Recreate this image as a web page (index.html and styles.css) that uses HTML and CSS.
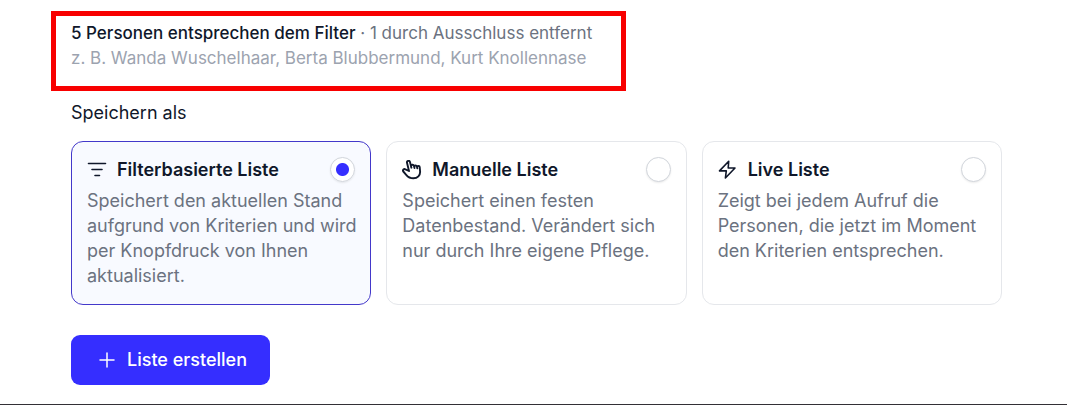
FILE: index.html
```html
<!DOCTYPE html>
<html lang="de">
<head>
<meta charset="utf-8">
<meta name="viewport" content="width=device-width, initial-scale=1">
<title>Liste speichern</title>
<link rel="stylesheet" href="styles.css">
</head>
<body>
<form class="page">
  <section class="summary">
    <p class="summary-line"><strong class="summary-count">5 Personen entsprechen dem Filter</strong> · 1 durch Ausschluss entfernt</p>
    <p class="summary-names">z. B. Wanda Wuschelhaar, Berta Blubbermund, Kurt Knollennase</p>
  </section>

  <h2 class="label" id="save-as">Speichern als</h2>
  <div class="options" role="radiogroup" aria-labelledby="save-as">
    <label class="option" for="type-filter">
      <span class="option-head">
        <svg class="icon" viewBox="0 0 20 20" aria-hidden="true"><path d="M1.500 3.500h17M5 9.500h10M8 15.500h4.500"/></svg>
        <span class="option-title">Filterbasierte Liste</span>
        <input class="option-radio" type="radio" name="type" id="type-filter" checked>
      </span>
      <span class="option-text">Speichert den aktuellen Stand aufgrund von Kriterien und wird per Knopfdruck von Ihnen aktualisiert.</span>
    </label>
    <label class="option" for="type-manual">
      <span class="option-head">
        <svg class="icon icon-bold" viewBox="0 0 20 20" aria-hidden="true"><path d="M7 11 5 2.700a1.500 1.500 0 0 1 3-.7l1.400 5.700M9.300 7.500 9 6.200a1.500 1.500 0 0 1 2.900-.5l.6 2.300M12.200 6.700a1.400 1.400 0 0 1 2.700-.2l.4 1.900M15.100 7.200a1.300 1.300 0 0 1 2.600-.1l.4 4.400c.3 3.800-2.600 6.800-6.700 6.800-3.300 0-5.300-1.200-7.200-3.500L1.300 11.500a1.500 1.500 0 0 1 2.100-2.100L7 11"/></svg>
        <span class="option-title">Manuelle Liste</span>
        <input class="option-radio" type="radio" name="type" id="type-manual">
      </span>
      <span class="option-text">Speichert einen festen Datenbestand. Verändert sich nur durch Ihre eigene Pflege.</span>
    </label>
    <label class="option" for="type-live">
      <span class="option-head">
        <svg class="icon" viewBox="0 0 20 20" aria-hidden="true"><path d="M10.700 1.200 1.500 10.900h6.800L7.400 18 17 8h-6.800z"/></svg>
        <span class="option-title">Live Liste</span>
        <input class="option-radio" type="radio" name="type" id="type-live">
      </span>
      <span class="option-text">Zeigt bei jedem Aufruf die Personen, die jetzt im Moment den Kriterien entsprechen.</span>
    </label>
  </div>

  <button class="create" type="button">
    <svg class="create-icon" viewBox="0 0 16 16" aria-hidden="true"><path d="M8 1v14M1 8h14"/></svg>
    Liste erstellen
  </button>
</form>
</body>
</html>
```
FILE: styles.css
```css
* {
  box-sizing: border-box;
}

body {
  margin: 0;
  background: #fff;
  color: #0f172a;
  font: 400 18px/25px Inter, "Liberation Sans", sans-serif;
}

.page {
  display: flex;
  flex-direction: column;
  align-items: flex-start;
  min-height: 100vh;
  padding: 11px 65px 19px 71px;
  border-bottom: 1px solid #333036;
}

.summary {
  margin-left: -20px;
  padding: 5px 29px 15px 15px;
  border: 5px solid #f80000;
  font-size: 17px;
}

.summary-line,
.summary-names {
  margin: 0;
}

.summary-line {
  color: #6b7280;
}

.summary-count {
  color: #0f172a;
  font-weight: 500;
}

.summary-names {
  color: #9ca3af;
}

.label {
  margin: 9px 0 16px;
  font-size: 18px;
  font-weight: 400;
}

.options {
  display: grid;
  grid-template-columns: repeat(3, 1fr);
  gap: 15px;
  width: 100%;
}

.option {
  display: flex;
  flex-direction: column;
  gap: 6px;
  padding: 15px 10px 16px 15px;
  border: 1px solid #e5e7eb;
  border-radius: 12px;
}

.option:has(:checked) {
  border-color: #4338ca;
  background: #f8faff;
}

.option-head {
  display: flex;
  align-items: center;
  gap: 10px;
  padding-right: 5px;
}

.icon {
  width: 20px;
  height: 20px;
  fill: none;
  stroke: #0f172a;
  stroke-width: 1.6;
  stroke-linecap: round;
  stroke-linejoin: round;
}

.icon-bold {
  stroke-width: 1.9;
}

.option-title {
  flex: 1;
  font-weight: 600;
}

.option-radio {
  appearance: none;
  width: 25px;
  height: 25px;
  margin: 0;
  border: 1px solid #d1d5db;
  border-radius: 50%;
  background: #fff;
  box-shadow: 0 1px 2px rgb(0 0 0 / 8%);
}

.option-radio:checked {
  background: radial-gradient(circle, #352eff 6px, #fff 7px);
}

.option-text {
  color: #6b7280;
}

.create {
  display: flex;
  align-items: center;
  gap: 12px;
  margin-top: 30px;
  padding: 12px 23px 13px 28px;
  border: 0;
  border-radius: 9px;
  background: #352eff;
  color: #fff;
  font: inherit;
  font-weight: 500;
}

.create-icon {
  width: 16px;
  height: 16px;
  fill: none;
  stroke: currentColor;
  stroke-width: 1.5;
  stroke-linecap: round;
}
```
